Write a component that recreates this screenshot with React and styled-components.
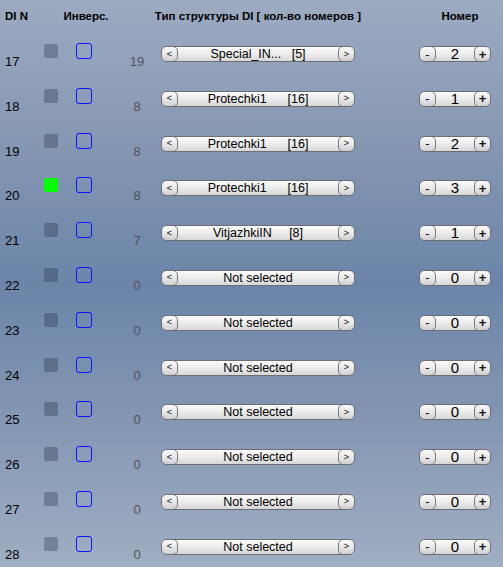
import React from "react";
import styled, { createGlobalStyle } from "styled-components";

const Global = createGlobalStyle`
  html, body { margin: 0; padding: 0; }
  body {
    width: 503px;
    height: 567px;
    overflow: hidden;
    font-family: "Liberation Sans", Arial, sans-serif;
    background: linear-gradient(to bottom, #9dabc2 0%, #8697b3 25%, #6b85a9 50%, #8497b3 75%, #a0aec3 100%);
  }
`;

const Page = styled.div`
  width: 503px;
  height: 567px;
  display: flex;
  flex-direction: column;
  overflow: hidden;
`;

const Header = styled.div`
  flex: none;
  display: grid;
  grid-template-columns: 60px 52px 40px 212px 56px 80px;
  height: 35px;
  padding-top: 9px;
  box-sizing: border-box;
  font-size: 11.5px;
  font-weight: bold;
  color: #000;
  line-height: 14px;
`;

const HeadCell = styled.div`
  text-align: ${(p) => p.$align || "center"};
  padding-left: ${(p) => (p.$align === "left" ? "5px" : "0")};
  white-space: nowrap;
`;

const Row = styled.div`
  flex: none;
  display: grid;
  grid-template-columns: 44px 32px 46px 30px 203px 136px;
  height: 44.8px;
  align-items: start;
`;

const DiNum = styled.div`
  padding-left: 5px;
  margin-top: 19px;
  font-size: 13px;
  line-height: 16px;
  color: #000;
`;

const Indicator = styled.div`
  width: 14px;
  height: 14px;
  margin-top: 9px;
  border-radius: 2px;
  background: ${(p) => (p.$on ? "#00ff00" : "rgba(35, 45, 65, 0.32)")};
`;

const Check = styled.div`
  width: 16px;
  height: 16px;
  margin-top: 8px;
  box-sizing: border-box;
  border: 1.5px solid #0a14ff;
  border-radius: 3px;
`;

const Count = styled.div`
  margin-top: 19px;
  text-align: center;
  font-size: 13px;
  line-height: 16px;
  color: #505458;
`;

const Spinner = styled.div`
  justify-self: end;
  width: ${(p) => p.$w}px;
  height: 16px;
  margin-top: 11px;
  box-sizing: border-box;
  display: flex;
  align-items: stretch;
  border: 1px solid #6e6e72;
  border-radius: 6px;
  background: linear-gradient(to bottom, #fbfbfb 0%, #ececec 50%, #d6d7d9 100%);
  overflow: hidden;
`;

const Btn = styled.div`
  width: 17px;
  flex: none;
  box-sizing: border-box;
  border-radius: 5px;
  border: 1px solid #7a7a7e;
  margin: -1px;
  ${(p) => (p.$side === "left" ? "margin-right: 0;" : "margin-left: 0;")}
  background: linear-gradient(to bottom, #fafafa 0%, #e4e4e4 60%, #cfcfd2 100%);
  display: flex;
  align-items: center;
  justify-content: center;
  font-size: ${(p) => p.$fs || 9}px;
  line-height: 1;
  color: #111;
  font-weight: ${(p) => (p.$bold ? "bold" : "normal")};
`;

const Label = styled.div`
  flex: 1;
  text-align: center;
  white-space: pre;
  font-size: 12.5px;
  line-height: 14px;
  color: #000;
`;

const Value = styled.div`
  flex: 1;
  text-align: center;
  font-size: 15px;
  line-height: 14px;
  color: #000;
`;

const rows = [
  { n: 17, on: false, c: 19, label: "Special_IN...   [5]", v: 2 },
  { n: 18, on: false, c: 8, label: "Protechki1      [16]", v: 1 },
  { n: 19, on: false, c: 8, label: "Protechki1      [16]", v: 2 },
  { n: 20, on: true, c: 8, label: "Protechki1      [16]", v: 3 },
  { n: 21, on: false, c: 7, label: "VitjazhkiIN     [8]", v: 1 },
  ...[22, 23, 24, 25, 26, 27, 28].map((n) => ({ n, on: false, c: 0, label: "Not selected", v: 0 })),
];

export default function App() {
  return (
    <Page>
      <Global />
      <Header>
        <HeadCell $align="left">DI N</HeadCell>
        <HeadCell>Инверс.</HeadCell>
        <HeadCell />
        <HeadCell>Тип структуры DI [ кол-во номеров ]</HeadCell>
        <HeadCell />
        <HeadCell>Номер</HeadCell>
      </Header>
      {rows.map((r) => (
        <Row key={r.n}>
          <DiNum>{r.n}</DiNum>
          <Indicator $on={r.on} />
          <Check />
          <Count>{r.c}</Count>
          <Spinner $w={194}>
            <Btn $side="left">&lt;</Btn>
            <Label>{r.label}</Label>
            <Btn $side="right">&gt;</Btn>
          </Spinner>
          <Spinner $w={72}>
            <Btn $side="left" $fs={13}>-</Btn>
            <Value>{r.v}</Value>
            <Btn $side="right" $fs={13} $bold>+</Btn>
          </Spinner>
        </Row>
      ))}
    </Page>
  );
}
